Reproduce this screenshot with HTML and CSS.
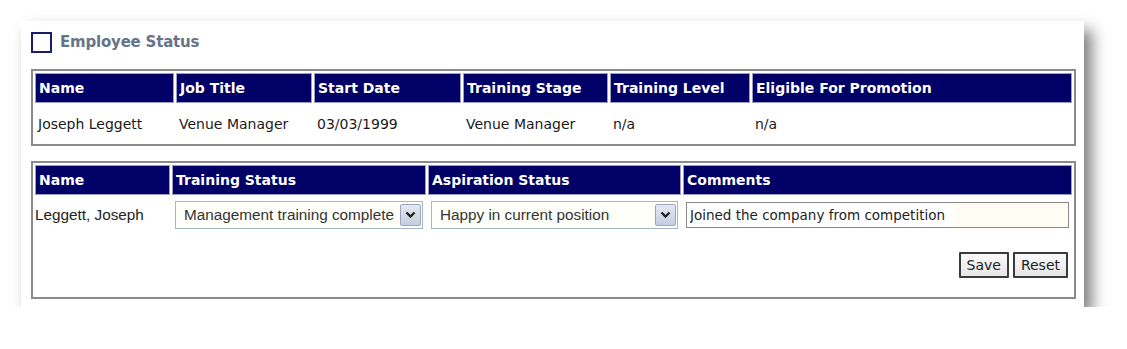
FILE: index.html
```html
<!DOCTYPE html>
<html>
<head>
<meta charset="utf-8">
<link rel="stylesheet" href="styles.css">
</head>
<body>
<div class="card">
  <div class="title-row">
    <span class="box"></span>
    <span class="title">Employee Status</span>
  </div>
  <table class="grid grid1">
    <colgroup>
      <col class="c1"><col class="c2"><col class="c3"><col class="c4"><col class="c5"><col>
    </colgroup>
    <thead>
      <tr><th>Name</th><th>Job Title</th><th>Start Date</th><th>Training Stage</th><th>Training Level</th><th>Eligible For Promotion</th></tr>
    </thead>
    <tbody>
      <tr><td>Joseph Leggett</td><td>Venue Manager</td><td>03/03/1999</td><td>Venue Manager</td><td>n/a</td><td>n/a</td></tr>
    </tbody>
  </table>
  <table class="grid grid2">
    <colgroup>
      <col class="d1"><col class="d2"><col class="d3"><col>
    </colgroup>
    <thead>
      <tr><th>Name</th><th>Training Status</th><th>Aspiration Status</th><th>Comments</th></tr>
    </thead>
    <tbody>
      <tr class="edit-row">
        <td class="arial">Leggett, Joseph</td>
        <td><div class="select"><span class="sel-text">Management training complete</span><span class="sel-btn"><svg width="11" height="8" viewBox="0 0 11 8"><path d="M1.5 1.5 L5.5 5.5 L9.5 1.5" fill="none" stroke="#222" stroke-width="2.4"/></svg></span></div></td>
        <td><div class="select"><span class="sel-text">Happy in current position</span><span class="sel-btn"><svg width="11" height="8" viewBox="0 0 11 8"><path d="M1.5 1.5 L5.5 5.5 L9.5 1.5" fill="none" stroke="#222" stroke-width="2.4"/></svg></span></div></td>
        <td><input class="comment" type="text" value="Joined the company from competition"></td>
      </tr>
      <tr class="btn-row">
        <td colspan="4"><div class="actions"><button class="btn">Save</button><button class="btn">Reset</button></div></td>
      </tr>
    </tbody>
  </table>
</div>
</body>
</html>
```

FILE: styles.css
```css
html, body {
  margin: 0;
  padding: 0;
  background: #ffffff;
}
body {
  font-family: "DejaVu Sans", Verdana, sans-serif;
  font-size: 14px;
  color: #1a1a1a;
}
.card {
  margin: 21px 0 0 21px;
  width: 1043px;
  height: 275px;
  padding: 11px 10px 0 10px;
  background: #fff;
  box-shadow: 8px 9px 14px rgba(0, 0, 0, 0.5);
}
.title-row {
  display: flex;
  align-items: center;
  gap: 8px;
  height: 20px;
}
.box {
  width: 17px;
  height: 17px;
  border: 2px solid #1b1b6e;
  box-sizing: content-box;
}
.title {
  font-weight: bold;
  font-size: 15px;
  color: #667388;
  letter-spacing: -0.2px;
}
.grid {
  width: 1045px;
  border: 2px solid #8a8a8a;
  border-collapse: separate;
  border-spacing: 2px;
  table-layout: fixed;
  box-sizing: border-box;
}
.grid1 {
  margin-top: 17px;
  height: 77px;
}
.grid2 {
  margin-top: 15px;
  height: 138px;
}
.grid th {
  background: #000066;
  color: #fff;
  font-weight: bold;
  font-size: 14px;
  text-align: left;
  height: 28px;
  padding: 0 3px;
  border: 1px solid #9c9cc4;
  white-space: nowrap;
}
.grid td {
  padding: 0 3px;
  white-space: nowrap;
}
.grid1 td {
  padding-top: 1px;
}
.c1 { width: 139px; }
.c2 { width: 136px; }
.c3 { width: 147px; }
.c4 { width: 145px; }
.c5 { width: 140px; }
.d1 { width: 135px; }
.d2 { width: 254px; }
.d3 { width: 253px; }
.arial {
  font-family: "Liberation Sans", Arial, sans-serif;
  font-size: 15.3px;
  color: #222;
  padding-left: 0 !important;
}
.edit-row td {
  height: 34px;
  padding-top: 1px;
}
.select {
  display: flex;
  align-items: center;
  justify-content: space-between;
  height: 28px;
  box-sizing: border-box;
  border: 1px solid #a3b6cc;
  background: #fffffa;
  padding: 0 1px 0 8px;
  font-family: "Liberation Sans", Arial, sans-serif;
  font-size: 15.3px;
  color: #333;
}
.sel-text {
  white-space: nowrap;
  overflow: hidden;
}
.sel-btn {
  flex: none;
  width: 21px;
  height: 22px;
  box-sizing: border-box;
  border: 1px solid #9aa6bb;
  border-radius: 2px;
  background: linear-gradient(#e4e8f2, #c5cde0);
  display: flex;
  align-items: center;
  justify-content: center;
}
.comment {
  width: 383px;
  height: 26px;
  box-sizing: border-box;
  border: 1px solid #8a8a8a;
  background: linear-gradient(90deg, #ffffff 70%, #fffdf3 70%);
  font-family: "DejaVu Sans", Verdana, sans-serif;
  font-size: 13.5px;
  color: #222;
  padding: 0 3px;
  outline: none;
}
.btn-row td {
  vertical-align: top;
  padding-top: 18px;
}
.actions {
  display: flex;
  justify-content: flex-end;
  gap: 4px;
  padding-right: 1px;
}
.btn {
  height: 26px;
  box-sizing: border-box;
  border: 2px solid #3a3a3a;
  border-radius: 1px;
  background: linear-gradient(#fafafa, #e6e6e6);
  font-family: "DejaVu Sans", Verdana, sans-serif;
  font-size: 14px;
  color: #222;
  padding: 0 6px;
}
```
